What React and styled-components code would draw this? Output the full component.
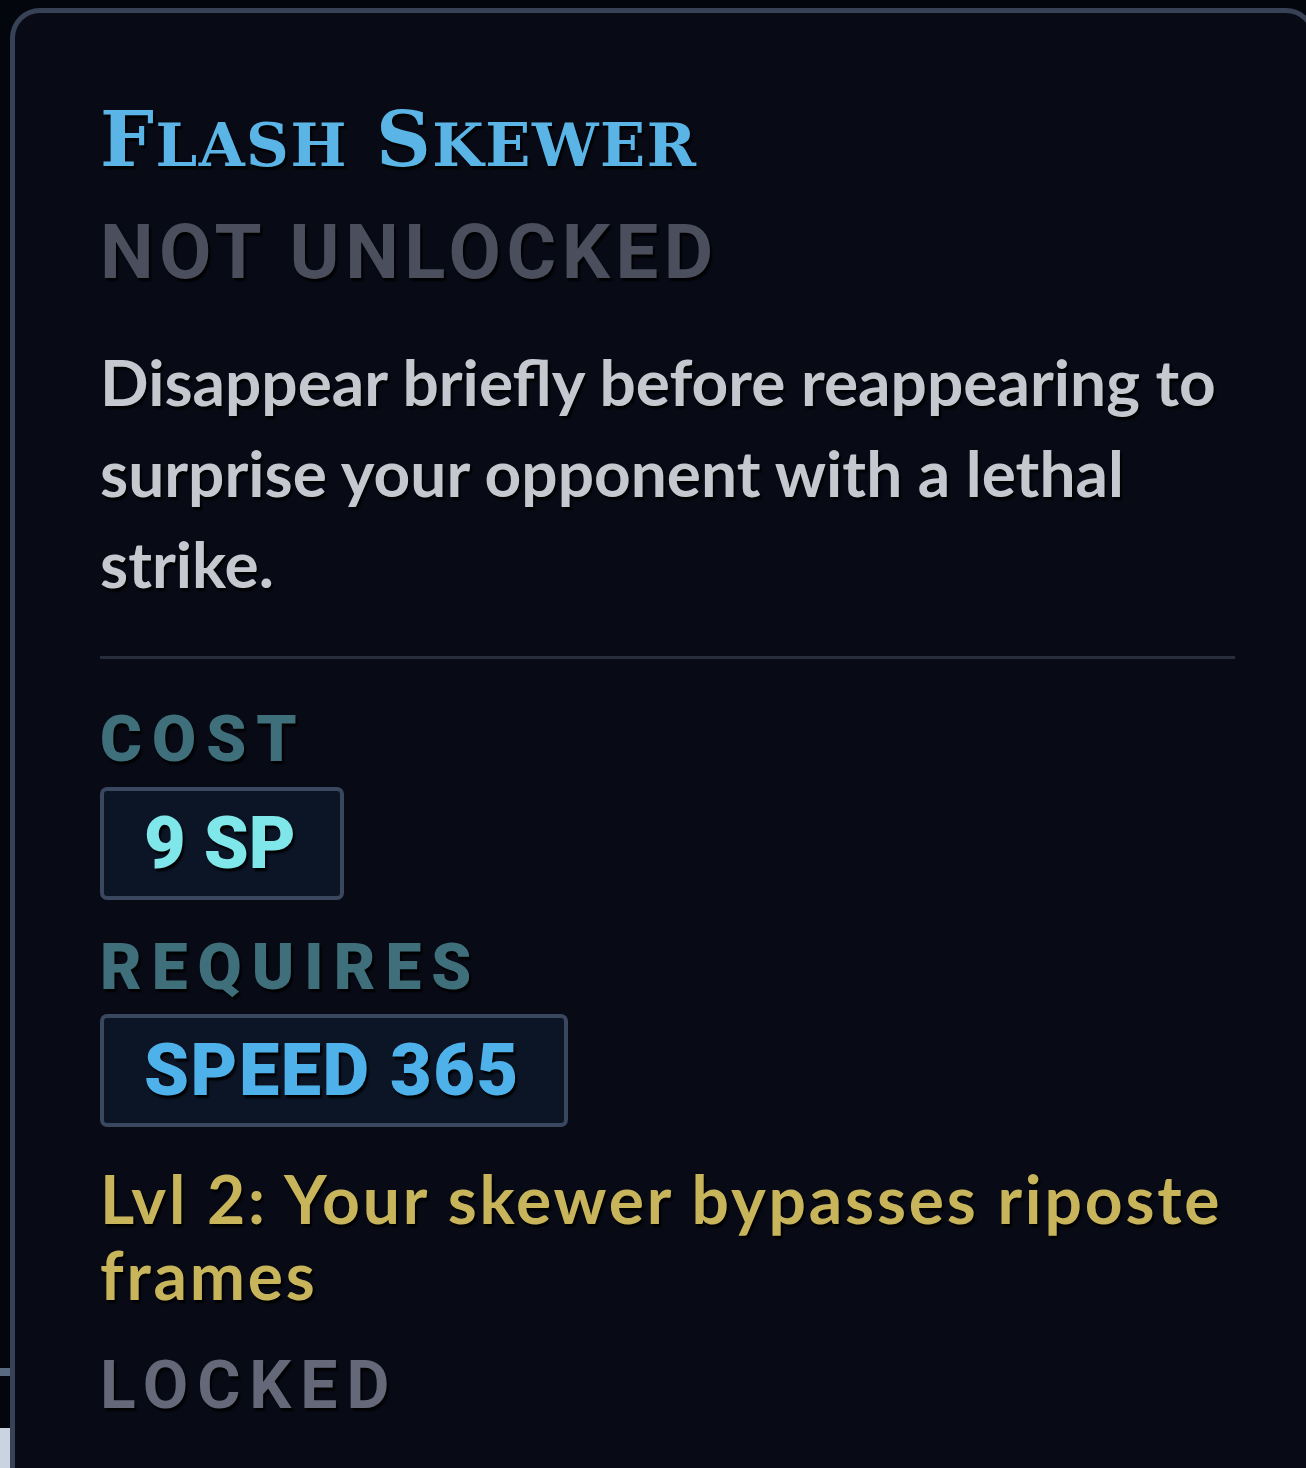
import React from "react";
import styled, { createGlobalStyle } from "styled-components";

const Global = createGlobalStyle`
  html, body {
    margin: 0;
    padding: 0;
    background: #04060d;
    overflow: hidden;
  }
  #root {
    width: 1306px;
    height: 1468px;
  }
`;

const Page = styled.div`
  display: flex;
  align-items: stretch;
  width: 1306px;
  height: 1468px;
  padding-top: 8px;
  box-sizing: border-box;
  background: #04060d;
  overflow: hidden;
`;

const EdgeStrip = styled.div`
  width: 10px;
  flex: none;
  display: flex;
  flex-direction: column;
  justify-content: flex-end;
  gap: 52px;
`;

const EdgeMark = styled.div`
  height: ${(p) => p.$h}px;
  background: ${(p) => p.$c};
`;

const Card = styled.div`
  flex: none;
  width: 1306px;
  height: 1520px;
  box-sizing: border-box;
  border: 5px solid #384256;
  border-radius: 30px;
  background: #080b16;
  padding: 84px 0 0 85px;
  display: flex;
  flex-direction: column;
  align-items: flex-start;
`;

const Title = styled.h1`
  margin: 0;
  font-family: "DejaVu Serif", "Liberation Serif", serif;
  font-weight: 700;
  font-size: 76px;
  line-height: 86px;
  letter-spacing: 1.5px;
  color: #5ab4e6;
  text-shadow: 2px 3px 2px rgba(0, 0, 0, 0.95);
`;

const SmallCaps = styled.span`
  font-size: 0.78em;
  text-transform: uppercase;
`;

const Status = styled.div`
  margin-top: ${(p) => p.$top || 0}px;
  font-family: Roboto, "Liberation Sans", sans-serif;
  font-weight: 700;
  font-size: ${(p) => p.$size || 76}px;
  line-height: 1;
  letter-spacing: ${(p) => p.$spacing || 4}px;
  color: ${(p) => p.$color || "#4a4e5d"};
  text-shadow: 2px 3px 2px rgba(0, 0, 0, 0.95);
`;

const Description = styled.p`
  margin: 46px 0 0;
  width: 1160px;
  font-family: Lato, "Liberation Sans", sans-serif;
  font-weight: 700;
  font-size: 64px;
  line-height: 91px;
  letter-spacing: 0;
  color: #c6c8d0;
  text-shadow: 2px 3px 2px rgba(0, 0, 0, 0.95);
`;

const Divider = styled.hr`
  margin: 47px 0 0;
  width: 1135px;
  height: 3px;
  border: 0;
  background: #272d3b;
`;

const SectionLabel = styled.div`
  margin-top: ${(p) => p.$top}px;
  font-family: Roboto, "Liberation Sans", sans-serif;
  font-weight: 900;
  font-size: 64px;
  line-height: 1;
  letter-spacing: ${(p) => p.$spacing}px;
  color: #3e6f7b;
  text-shadow: 2px 3px 2px rgba(0, 0, 0, 0.95);
`;

const Badge = styled.div`
  margin-top: ${(p) => p.$top}px;
  box-sizing: border-box;
  height: 113px;
  padding: 0 44px 0 40px;
  display: flex;
  align-items: center;
  border: 4px solid #39475f;
  border-radius: 7px;
  background: #0b1526;
  font-family: Roboto, "Liberation Sans", sans-serif;
  font-weight: 900;
  font-size: 72px;
  letter-spacing: ${(p) => p.$spacing || 0}px;
  color: ${(p) => p.$color};
  text-shadow: 2px 3px 2px rgba(0, 0, 0, 0.95);
`;

const LevelNote = styled.p`
  margin: 34px 0 0;
  width: 1160px;
  font-family: Lato, "Liberation Sans", sans-serif;
  font-weight: 700;
  font-size: 66px;
  line-height: 76px;
  letter-spacing: 2.8px;
  color: #c8b45b;
  text-shadow: 2px 3px 2px rgba(0, 0, 0, 0.95);
`;

function CapsTitle({ text }) {
  const words = text.split(" ");
  return (
    <Title>
      {words.map((w, i) => (
        <React.Fragment key={i}>
          {i > 0 && " "}
          {w[0]}
          <SmallCaps>{w.slice(1)}</SmallCaps>
        </React.Fragment>
      ))}
    </Title>
  );
}

export default function App() {
  return (
    <>
      <Global />
      <Page>
        <EdgeStrip>
          <EdgeMark $h={8} $c="#5a6a80" />
          <EdgeMark $h={40} $c="#c9d3e2" />
        </EdgeStrip>
        <Card>
          <CapsTitle text="Flash Skewer" />
          <Status $top={26} $spacing={5.5}>NOT UNLOCKED</Status>
          <Description>
            Disappear briefly before reappearing to surprise your opponent
            with a lethal strike.
          </Description>
          <Divider />
          <SectionLabel $top={49} $spacing={10}>COST</SectionLabel>
          <Badge $top={15} $color="#7fe6ea">9 SP</Badge>
          <SectionLabel $top={36} $spacing={10}>REQUIRES</SectionLabel>
          <Badge $top={14} $spacing={1.5} $color="#4fb1ea">SPEED 365</Badge>
          <LevelNote>Lvl 2: Your skewer bypasses riposte frames</LevelNote>
          <Status $top={40} $size={66} $spacing={9} $color="#646879">
            LOCKED
          </Status>
        </Card>
      </Page>
    </>
  );
}
